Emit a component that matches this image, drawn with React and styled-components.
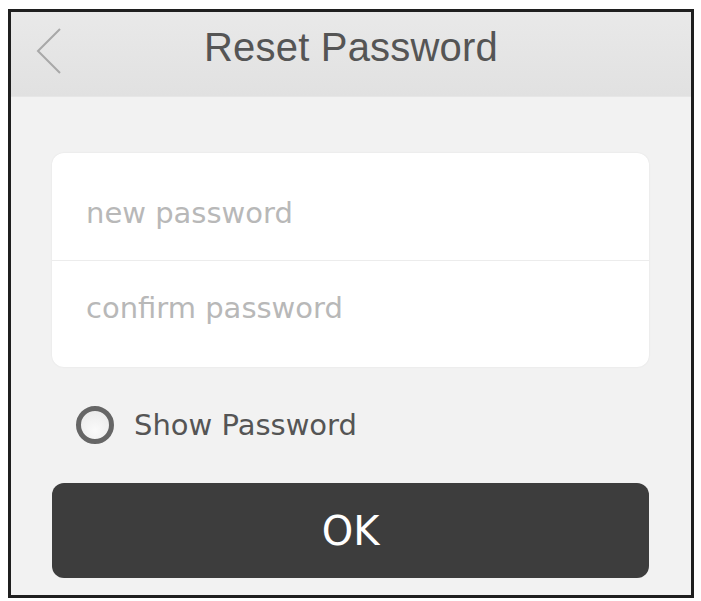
import React, { useState } from "react";
import styled, { createGlobalStyle } from "styled-components";

const GlobalStyle = createGlobalStyle`
  body {
    margin: 0;
    background: #ffffff;
    font-family: "DejaVu Sans", "Liberation Sans", sans-serif;
  }
`;

const Frame = styled.div`
  box-sizing: border-box;
  width: 686px;
  height: 589px;
  margin: 9px 0 0 8px;
  border: 3px solid #1f1f1f;
  background: #f2f2f2;
  display: flex;
  flex-direction: column;
`;

const Header = styled.div`
  height: 84px;
  display: flex;
  align-items: flex-start;
  position: relative;
  background: linear-gradient(#e9e9e9, #e1e1e1);
  border-bottom: 1px solid #e6e6e6;
`;

const Back = styled.button`
  position: absolute;
  left: 22px;
  top: 14px;
  width: 32px;
  height: 50px;
  border: none;
  background: none;
  padding: 0;
`;

const Title = styled.h1`
  flex: 1;
  margin: 0;
  padding-top: 12px;
  text-align: center;
  font-family: "Liberation Sans", sans-serif;
  font-weight: 400;
  font-size: 40px;
  line-height: 46px;
  color: #555555;
  letter-spacing: 0.2px;
`;

const Content = styled.div`
  display: flex;
  flex-direction: column;
  padding: 56px 42px 0 41px;
`;

const Card = styled.div`
  background: #ffffff;
  border-radius: 12px;
  box-shadow: 0 0 2px rgba(0, 0, 0, 0.08);
  display: flex;
  flex-direction: column;
`;

const Field = styled.input`
  box-sizing: border-box;
  height: 107px;
  border: none;
  border-top: ${(p) => (p.$divider ? "1px solid #ececec" : "none")};
  background: transparent;
  padding: ${(p) => (p.$divider ? "0 0 12px 34px" : "13px 0 0 34px")};
  font-family: "DejaVu Sans", sans-serif;
  font-size: 29px;
  color: #555;
  outline: none;
  &::placeholder {
    color: #b8b8b8;
  }
`;

const ShowRow = styled.label`
  display: flex;
  align-items: center;
  gap: 20px;
  margin-top: 39px;
  padding-left: 24px;
  height: 38px;
  font-size: 29px;
  color: #555;
  cursor: pointer;
`;

const Radio = styled.span`
  box-sizing: border-box;
  width: 38px;
  height: 38px;
  border-radius: 50%;
  border: 5px solid #666666;
  background: ${(p) =>
    p.$on ? "radial-gradient(#666 40%, #fff 45%)" : "radial-gradient(circle at 50% 70%, #fafafa, #e8e8e8)"};
`;

const OkButton = styled.button`
  margin-top: 39px;
  height: 95px;
  border: none;
  border-radius: 12px;
  background: #3d3d3d;
  color: #ffffff;
  font-family: "DejaVu Sans", sans-serif;
  font-size: 40px;
  cursor: pointer;
`;

const App = () => {
  const [show, setShow] = useState(false);
  return (
    <>
      <GlobalStyle />
      <Frame>
        <Header>
          <Back aria-label="back">
            <svg width="32" height="50" viewBox="0 0 32 50">
              <path d="M27 3 L5 25 L27 47" fill="none" stroke="#a8a8a8" strokeWidth="2" />
            </svg>
          </Back>
          <Title>Reset Password</Title>
        </Header>
        <Content>
          <Card>
            <Field type={show ? "text" : "password"} placeholder="new password" />
            <Field $divider type={show ? "text" : "password"} placeholder="confirm password" />
          </Card>
          <ShowRow onClick={() => setShow(!show)}>
            <Radio $on={show} />
            Show Password
          </ShowRow>
          <OkButton>OK</OkButton>
        </Content>
      </Frame>
    </>
  );
};

export default App;
